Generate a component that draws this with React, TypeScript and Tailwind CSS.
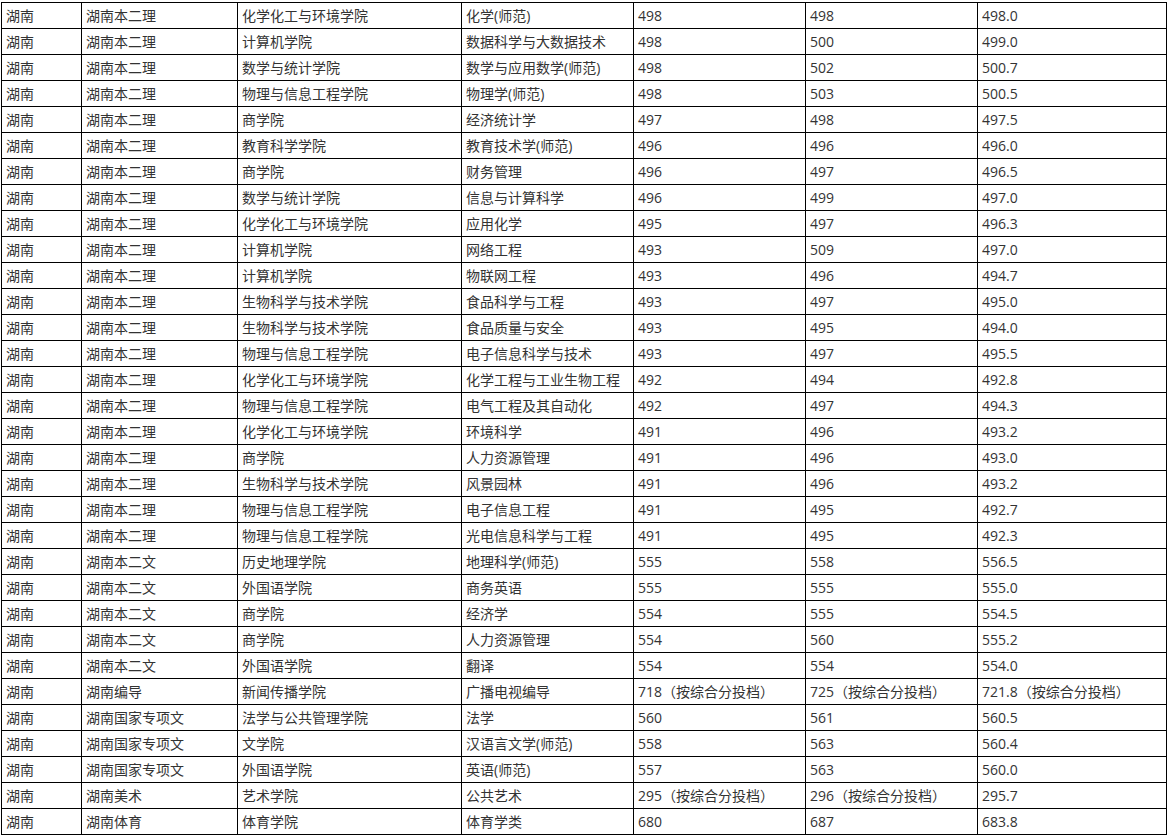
import React from 'react';

type Row = [string, string, string, string, string, string, string];

const P = '（按综合分投档）';

const rows: Row[] = [
  ['湖南', '湖南本二理', '化学化工与环境学院', '化学(师范)', '498', '498', '498.0'],
  ['湖南', '湖南本二理', '计算机学院', '数据科学与大数据技术', '498', '500', '499.0'],
  ['湖南', '湖南本二理', '数学与统计学院', '数学与应用数学(师范)', '498', '502', '500.7'],
  ['湖南', '湖南本二理', '物理与信息工程学院', '物理学(师范)', '498', '503', '500.5'],
  ['湖南', '湖南本二理', '商学院', '经济统计学', '497', '498', '497.5'],
  ['湖南', '湖南本二理', '教育科学学院', '教育技术学(师范)', '496', '496', '496.0'],
  ['湖南', '湖南本二理', '商学院', '财务管理', '496', '497', '496.5'],
  ['湖南', '湖南本二理', '数学与统计学院', '信息与计算科学', '496', '499', '497.0'],
  ['湖南', '湖南本二理', '化学化工与环境学院', '应用化学', '495', '497', '496.3'],
  ['湖南', '湖南本二理', '计算机学院', '网络工程', '493', '509', '497.0'],
  ['湖南', '湖南本二理', '计算机学院', '物联网工程', '493', '496', '494.7'],
  ['湖南', '湖南本二理', '生物科学与技术学院', '食品科学与工程', '493', '497', '495.0'],
  ['湖南', '湖南本二理', '生物科学与技术学院', '食品质量与安全', '493', '495', '494.0'],
  ['湖南', '湖南本二理', '物理与信息工程学院', '电子信息科学与技术', '493', '497', '495.5'],
  ['湖南', '湖南本二理', '化学化工与环境学院', '化学工程与工业生物工程', '492', '494', '492.8'],
  ['湖南', '湖南本二理', '物理与信息工程学院', '电气工程及其自动化', '492', '497', '494.3'],
  ['湖南', '湖南本二理', '化学化工与环境学院', '环境科学', '491', '496', '493.2'],
  ['湖南', '湖南本二理', '商学院', '人力资源管理', '491', '496', '493.0'],
  ['湖南', '湖南本二理', '生物科学与技术学院', '风景园林', '491', '496', '493.2'],
  ['湖南', '湖南本二理', '物理与信息工程学院', '电子信息工程', '491', '495', '492.7'],
  ['湖南', '湖南本二理', '物理与信息工程学院', '光电信息科学与工程', '491', '495', '492.3'],
  ['湖南', '湖南本二文', '历史地理学院', '地理科学(师范)', '555', '558', '556.5'],
  ['湖南', '湖南本二文', '外国语学院', '商务英语', '555', '555', '555.0'],
  ['湖南', '湖南本二文', '商学院', '经济学', '554', '555', '554.5'],
  ['湖南', '湖南本二文', '商学院', '人力资源管理', '554', '560', '555.2'],
  ['湖南', '湖南本二文', '外国语学院', '翻译', '554', '554', '554.0'],
  ['湖南', '湖南编导', '新闻传播学院', '广播电视编导', '718' + P, '725' + P, '721.8' + P],
  ['湖南', '湖南国家专项文', '法学与公共管理学院', '法学', '560', '561', '560.5'],
  ['湖南', '湖南国家专项文', '文学院', '汉语言文学(师范)', '558', '563', '560.4'],
  ['湖南', '湖南国家专项文', '外国语学院', '英语(师范)', '557', '563', '560.0'],
  ['湖南', '湖南美术', '艺术学院', '公共艺术', '295' + P, '296' + P, '295.7'],
  ['湖南', '湖南体育', '体育学院', '体育学类', '680', '687', '683.8'],
];

// column widths between the black grid lines
const widths = ['w-[80px]', 'w-[156px]', 'w-[224px]', 'w-[172px]', 'w-[172px]', 'w-[172px]', 'w-[189px]'];

export default function App() {
  return (
    <div className="w-[1170px] h-[835px] overflow-hidden bg-white pt-[2px] pl-[1px]">
      <table
        className="table-fixed border-collapse text-[14px] text-[#333] leading-none"
        style={{ fontFamily: '"Open Sans", "Noto Sans CJK SC", sans-serif' }}
      >
        <colgroup>
          {widths.map((w, i) => (
            <col key={i} className={w} />
          ))}
        </colgroup>
        <tbody>
          {rows.map((r, i) => (
            <tr key={i} className="h-[26px]">
              {r.map((c, j) => (
                <td key={j} className="border border-black px-[4px] py-0 whitespace-nowrap align-middle">
                  {c}
                </td>
              ))}
            </tr>
          ))}
        </tbody>
      </table>
    </div>
  );
}
